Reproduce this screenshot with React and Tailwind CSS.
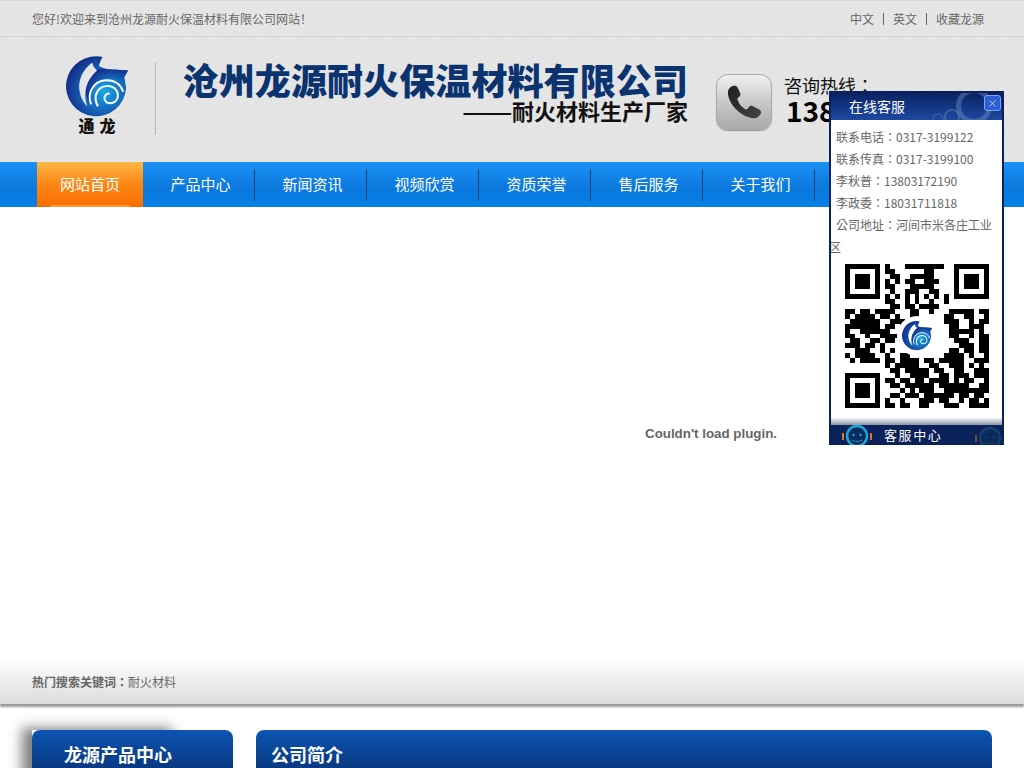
import React from "react";
import { X } from "lucide-react";

const navItems = ["产品中心", "新闻资讯", "视频欣赏", "资质荣誉", "售后服务", "关于我们", "联系我们"];

const contacts = [
  "联系电话：0317-3199122",
  "联系传真：0317-3199100",
  "李秋普：13803172190",
  "李政委：18031711818",
];

// 29x29 modules, read off the picture
const qrRows = [
  "11111110100011111111001111111",
  "10000010110000001100001000001",
  "10111010011001111100001011101",
  "10111010101011001110001011101",
  "10111010110001111100001011101",
  "10000010010011100110001000001",
  "11111110101010101010101111111",
  "00000000110010100100100000000",
  "00000000011011011110000000000",
  "11011011110001100100011111011",
  "10111101101001100000110011001",
  "01111110011101100000111001011",
  "11111110110100000000011001110",
  "10011111100100000000011111010",
  "11001001111000000000011001011",
  "01100110110000000000001110011",
  "11101101000000000000000111011",
  "00111001010000000000011011011",
  "10111100100110000000111101001",
  "01011110110111101101111100111",
  "00000000101111100110011101010",
  "00000000011011111011001100111",
  "11111110001001111001101110111",
  "10000010110110110111101011001",
  "10111010011011111101111110011",
  "10111010000101011100111111111",
  "10111010011011101111110110110",
  "10000010100100011101100101101",
  "11111110110110011000111001111",
];

const Logo = ({ size, id, gap }) => (
  <svg width={size} height={size} viewBox="0 0 64 64">
    <defs>
      <radialGradient id={id} cx="62%" cy="58%" r="62%">
        <stop offset="0%" stopColor="#1aa8e2" />
        <stop offset="45%" stopColor="#1670c0" />
        <stop offset="100%" stopColor="#132f8c" />
      </radialGradient>
    </defs>
    {/* disc with the dragon head cut out at upper right */}
    <path d="M38 1A31 31 0 1 0 62 33L60 22 64 15 50 14C44 15 36 12 27 7 28 10 30 12 33 14 36 2 38 1 38 1z" fill={`url(#${id})`} />
    <path d="M33 14C44 13 50 14 64 15L60 22 62 34C58 24 46 21 36 25 28 29 24 38 27 50 18 44 17 24 33 14z" fill={`url(#${id})`} />
    {/* gap between crescent and body */}
    <path d="M35 2C20 9 12 22 14 36 15 43 18 48 22 52 17 38 21 25 32 15 29 12 28 10 27 7 29 5 32 3 35 2z" fill={gap} />
    <path d="M26 50C21 38 29 25 42 25 51 25 57 30 59 37" fill="none" stroke="#fff" strokeWidth="2" />
    <path d="M33 52C27 41 33 31 43 31 51 31 55 38 53 44 50 50 42 50 40 45 39 41 42 38 45 39" fill="none" stroke="#e8f6ff" strokeWidth="2.2" />
  </svg>
);

const PhoneGlyph = () => (
  <svg width="37" height="37" viewBox="0 0 40 40">
    <defs>
      <linearGradient id="handset" x1="0" y1="0" x2="1" y2="1">
        <stop offset="0%" stopColor="#1f1f1f" />
        <stop offset="100%" stopColor="#444" />
      </linearGradient>
    </defs>
    <path d="M8 2C4 3 2 6 2 10 3 22 16 36 30 37 34 37 37 34 38 31 38 29 37 28 35 27L29 24C27 23 25 24 24 26 23 28 21 28 19 26 16 24 14 21 13 18 12 16 12 15 14 14 16 13 16 11 15 9L12 3C11 2 10 1.500 8 2z" fill="url(#handset)" />
  </svg>
);

const Smiley = ({ ring, bar }) => (
  <svg width="30" height="24" viewBox="0 0 30 24">
    <circle cx="15" cy="11" r="10" fill="#0b2a5c" stroke={ring} strokeWidth="2.500" />
    <circle cx="11.500" cy="10" r="1.200" fill={ring} />
    <circle cx="18.500" cy="10" r="1.200" fill={ring} />
    <path d="M10 15c3 2 7 2 10 0" fill="none" stroke={ring} strokeWidth="1" />
    <rect x="0" y="8" width="2" height="7" fill={bar} />
    <rect x="28" y="8" width="2" height="7" fill={bar} />
  </svg>
);

const ServicePanel = () => (
  <div className="absolute left-[829px] top-[91px] flex h-[354px] w-[175px] flex-col overflow-hidden border-x-2 border-t-2 border-[#0b2159] bg-white font-['Noto_Sans_CJK_TC','Liberation_Sans',sans-serif]">
    <div className="relative h-[27px] shrink-0 overflow-hidden bg-gradient-to-b from-[#0a2264] to-[#1e4aa2] pl-[18px] text-[14px] leading-[26px] text-white">
      在线客服
      <div className="absolute right-[10px] top-[-5px] h-[36px] w-[36px] rounded-full border-[5px] border-[#7f97c6]/40"></div>
      <div className="absolute right-[42px] top-[16px] h-[16px] w-[16px] rounded-full border-2 border-[#7f97c6]/35"></div>
      <div className="absolute right-[58px] top-[20px] h-[12px] w-[12px] rounded-full border-2 border-[#7f97c6]/25"></div>
      <div className="absolute right-[1px] top-[2px] flex h-[16px] w-[17px] items-center justify-center rounded-[3px] border border-[#7fa3ee] bg-[#2a5fd6]">
        <X size={11} strokeWidth={1.5} color="#fff" />
      </div>
    </div>
    <div className="flex-1 pt-[6px] text-[12px] leading-[22px] text-[#666]">
      {contacts.map((c) => (
        <p key={c} className="pl-[5px]">{c}</p>
      ))}
      <p className="-ml-[2px] indent-[7px]">公司地址：河间市米各庄工业区</p>
      <div className="relative ml-[14px] mt-[6px] h-[144px] w-[144px]">
        <svg width="144" height="144" viewBox="0 0 29 29" shapeRendering="crispEdges">
          {qrRows.map((row, y) =>
            row.split("").map((m, x) => (m === "1" ? <rect key={x + "-" + y} x={x} y={y} width="1" height="1" fill="#000" /> : null))
          )}
        </svg>
        <div className="absolute left-[52px] top-[52px] flex h-[40px] w-[40px] items-center justify-center rounded-full bg-white">
          <Logo size={30} id="qrLogo" gap="#fff" />
        </div>
      </div>
    </div>
    <div className="h-[7px] shrink-0 bg-gradient-to-b from-[#f4f5f8] to-[#8d96aa]"></div>
    <div className="relative flex h-[20px] shrink-0 items-center overflow-hidden bg-[#0b2159] pl-[53px] text-[13px] tracking-[1.6px] text-white">
      客服中心
      <div className="absolute left-[11px] top-0"><Smiley ring="#1ca6d8" bar="#d9772b" /></div>
      <div className="absolute left-[144px] top-[2px]"><Smiley ring="#123f70" bar="#7a4a30" /></div>
    </div>
  </div>
);

export default function App() {
  return (
    <div className="relative h-screen overflow-hidden bg-white font-['Noto_Sans_CJK_SC','Liberation_Sans',sans-serif] text-[12px] text-[#666]">
      {/* top bar */}
      <div className="flex h-[37px] items-center justify-between border-y border-t-[#d9d9d9] border-b-[#d4d4d4] bg-[#e6e5e5] pl-[32px] pr-[40px] pt-[1px]">
        <span>您好!欢迎来到沧州龙源耐火保温材料有限公司网站！</span>
        <div className="flex items-center">
          <span>中文</span>
          <span className="mx-[9px] h-[12px] w-px bg-[#666]"></span>
          <span>英文</span>
          <span className="mx-[9px] h-[12px] w-px bg-[#666]"></span>
          <span>收藏龙源</span>
        </div>
      </div>

      {/* header */}
      <div className="flex h-[125px] bg-[repeating-linear-gradient(155deg,#e5e5e5_0px,#e5e5e5_2px,#e1e1e1_3px,#e7e7e7_5px)]">
        <div className="ml-[66px] flex w-[62px] flex-col items-center pt-[19px]">
          <Logo size={62} id="mainLogo" gap="#e5e5e5" />
          <span className="ml-[5px] whitespace-nowrap text-[16px] font-black leading-[14px] tracking-[5px] text-[#111]">通龙</span>
        </div>
        <div className="ml-[27px] mt-[25px] h-[73px] w-px bg-[#b9b9b9]"></div>
        <div className="ml-[27px] flex w-[505px] flex-col items-end pt-[17px]">
          <div className="whitespace-nowrap text-[36px] font-black leading-[50px] tracking-[0.1px] text-[#0a3370]">沧州龙源耐火保温材料有限公司</div>
          <div className="-mt-[9px] whitespace-nowrap text-[22px] font-bold leading-[30px] text-[#111]">
            <span className="inline-block origin-right scale-x-[1.35]">——</span>耐火材料生产厂家
          </div>
        </div>
        <div className="ml-[28px] mt-[37px] flex h-[56px] w-[56px] items-center justify-center rounded-[12px] border border-[#aaa] bg-gradient-to-b from-[#f0f0f0] via-[#c9c9c9] to-[#a9a9a9] shadow-[0_1px_1px_rgba(0,0,0,0.35)]">
          <PhoneGlyph />
        </div>
        <div className="ml-[12px] pt-[36px] font-['Noto_Sans_CJK_TC','Liberation_Sans',sans-serif] text-[#111]">
          <div className="text-[18px] leading-[24px]">咨询热线：</div>
          <div className="-mt-[3px] ml-[2px] text-[28px] font-bold leading-[32px] text-black">13803172190</div>
        </div>
      </div>

      {/* nav */}
      <div className="flex h-[45px] bg-gradient-to-b from-[#1b90f6] via-[#0a78dc] via-60% to-[#0680e8] pl-[37px] text-[15px] text-white">
        <div className="relative flex w-[106px] items-center justify-center bg-gradient-to-b from-[#fdb845] via-[#fb8a17] via-45% to-[#fb6c00]">
          网站首页
          <div className="absolute bottom-0 left-[13px] h-[2px] w-[80px] rounded-t-full bg-[#fb9a3a]"></div>
        </div>
        {navItems.map((item) => (
          <div key={item} className="flex w-[112px] items-center justify-center border-r border-[#173f72] pl-[4px] [border-image:linear-gradient(to_bottom,transparent_8px,#1d3f70_8px,#1d3f70_38px,transparent_38px)_1]">
            {item}
          </div>
        ))}
      </div>

      {/* flash area */}
      <div className="flex h-[452px] items-center justify-center pl-[398px] pt-[2px] font-['Liberation_Sans',sans-serif] text-[13.33px] font-bold text-[#666]">
        Couldn't load plugin.
      </div>

      {/* hot keywords */}
      <div className="flex h-[45px] items-center bg-gradient-to-b from-white to-[#dcdcdc] pl-[32px] font-['Noto_Sans_CJK_TC','Liberation_Sans',sans-serif] shadow-[0_3px_2px_rgba(0,0,0,0.4)]">
        <b>热门搜索关键词：</b>耐火材料
      </div>

      {/* content headers */}
      <div className="mt-[26px] flex pl-[32px]">
        <div className="relative h-[60px] w-[201px]">
          <div className="absolute left-0 top-0 h-full w-[150px] shadow-[-10px_-2px_12px_rgba(0,0,0,0.5)]"></div>
          <div className="relative h-full rounded-t-[8px] bg-gradient-to-b from-[#0c55b4] to-[#062a66] pl-[32px] pt-[11px] text-[18px] font-bold leading-[26px] text-white">
            龙源产品中心
          </div>
        </div>
        <div className="ml-[23px] flex h-[60px] w-[736px] items-start rounded-t-[8px] bg-gradient-to-b from-[#0c55b4] to-[#062a66] pl-[15px] pt-[11px] text-[18px] font-bold leading-[26px] text-white">
          公司简介
        </div>
      </div>

      <ServicePanel />
    </div>
  );
}
